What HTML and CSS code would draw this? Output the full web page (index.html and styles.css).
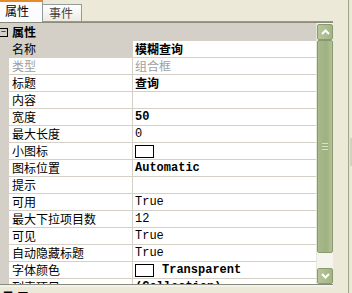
FILE: index.html
```html
<!DOCTYPE html>
<html lang="zh-CN">
<head>
  <meta charset="UTF-8" />
  <title>属性</title>
  <link rel="stylesheet" href="styles.css">
</head>
<body>
  <div class="window">
    <div class="main">
      <div class="tabs">
        <div class="tab active">属性</div>
        <div class="tab">事件</div>
        <div class="tab-fill"></div>
      </div>

      <div class="grid">
        <div class="rows">
          <div class="category">
            <span class="toggle">−</span>
            <span class="cat-name">属性</span>
          </div>
          <div class="row selected"><div class="name">名称</div><div class="value bold">模糊查询</div></div>
          <div class="row disabled"><div class="name">类型</div><div class="value">组合框</div></div>
          <div class="row"><div class="name">标题</div><div class="value bold">查询</div></div>
          <div class="row"><div class="name">内容</div><div class="value"></div></div>
          <div class="row"><div class="name">宽度</div><div class="value mono bold">50</div></div>
          <div class="row"><div class="name">最大长度</div><div class="value mono">0</div></div>
          <div class="row"><div class="name">小图标</div><div class="value"><span class="swatch"></span></div></div>
          <div class="row"><div class="name">图标位置</div><div class="value mono bold">Automatic</div></div>
          <div class="row"><div class="name">提示</div><div class="value"></div></div>
          <div class="row"><div class="name">可用</div><div class="value mono">True</div></div>
          <div class="row"><div class="name">最大下拉项目数</div><div class="value mono">12</div></div>
          <div class="row"><div class="name">可见</div><div class="value mono">True</div></div>
          <div class="row"><div class="name">自动隐藏标题</div><div class="value mono">True</div></div>
          <div class="row"><div class="name">字体颜色</div><div class="value mono bold"><span class="swatch"></span>Transparent</div></div>
          <div class="row"><div class="name">列表项目</div><div class="value mono bold">(Collection)</div></div>
        </div>

        <div class="scrollbar">
          <div class="sb-btn">
            <svg width="9" height="6" viewBox="0 0 9 6"><path d="M1 5 L4.5 1.5 L8 5" fill="none" stroke="#fff" stroke-width="2"/></svg>
          </div>
          <div class="sb-thumb"><span class="grip"></span></div>
          <div class="sb-track"></div>
          <div class="sb-btn">
            <svg width="9" height="6" viewBox="0 0 9 6"><path d="M1 1 L4.5 4.5 L8 1" fill="none" stroke="#fff" stroke-width="2"/></svg>
          </div>
        </div>
      </div>

      <div class="bottom">
        <span class="bottom-text">日 属</span>
      </div>
    </div>

    <div class="side">
      <div class="side-line"></div>
      <div class="side-edge"><div class="side-patch"></div></div>
    </div>
  </div>
</body>
</html>
```

FILE: styles.css
```css
body {
  margin: 0;
  width: 352px;
  height: 293px;
  overflow: hidden;
  background: #ece9d8;
  font-family: "Noto Sans CJK SC", "Liberation Sans", sans-serif;
  font-size: 12px;
  color: #000;
}

.window {
  display: flex;
  height: 293px;
}

.main {
  width: 333px;
  display: flex;
  flex-direction: column;
}

/* tabs */
.tabs {
  display: flex;
  align-items: flex-end;
  height: 22px;
}

.tab {
  box-sizing: border-box;
  width: 39px;
  height: 18px;
  border: 1px solid #919b9c;
  border-left: none;
  border-bottom: 1px solid #919b9c;
  background: linear-gradient(#ffffff, #ecebe5);
  color: #444;
  line-height: 16px;
  padding-left: 6px;
}

.tab.active {
  width: 43px;
  height: 22px;
  border-top: 2px solid #e68b2c;
  border-bottom: none;
  background: #fcfcfe;
  color: #000;
  line-height: 17px;
  padding-left: 5px;
}

.tab-fill {
  flex: 1;
  border-bottom: 1px solid #919b9c;
}

/* property grid */
.grid {
  display: flex;
  height: 261px;
  border-top: 1px solid #8c8c7c;
  border-bottom: 1px solid #8c8c7c;
  background: #fff;
}

.rows {
  flex: 1;
  overflow: hidden;
  background: #d4d0c8;
}

.category {
  display: flex;
  align-items: center;
  height: 18px;
  background: #d4d0c8;
}

.toggle {
  box-sizing: border-box;
  width: 8px;
  height: 9px;
  border: 1px solid #000;
  border-left: none;
  font-size: 9px;
  line-height: 6px;
  text-align: center;
  margin-right: 4px;
}

.cat-name {
  font-weight: bold;
  line-height: 16px;
}

.row {
  display: grid;
  grid-template-columns: 124px 1fr;
  height: 17px;
  margin-left: 9px;
  box-sizing: border-box;
  border-bottom: 1px solid #d4d0c8;
  background: #fff;
}

.name {
  padding-left: 3px;
  border-right: 1px solid #d4d0c8;
  line-height: 16px;
  white-space: nowrap;
}

.value {
  display: flex;
  align-items: center;
  padding-left: 2px;
  line-height: 16px;
  white-space: nowrap;
}

.row.selected .name {
  background: #d4d0c8;
  margin-left: -9px;
  padding-left: 12px;
}

.row.disabled {
  color: #a0a0a0;
}

.bold {
  font-weight: bold;
}

.mono {
  font-family: "Liberation Mono", "DejaVu Sans Mono", monospace;
}

.swatch {
  box-sizing: border-box;
  width: 19px;
  height: 13px;
  border: 1px solid #000;
  background: #fff;
  margin-right: 8px;
}

/* scrollbar */
.scrollbar {
  width: 16px;
  display: flex;
  flex-direction: column;
  background: #f5f5ee;
  border-left: 1px solid #e6e6dc;
}

.sb-btn {
  box-sizing: border-box;
  height: 16px;
  margin: 1px 0 0;
  border: 1px solid #8a9a70;
  border-radius: 2px;
  background: linear-gradient(90deg, #b7c69b, #a3b584);
  display: flex;
  align-items: center;
  justify-content: center;
}

.sb-thumb {
  box-sizing: border-box;
  height: 213px;
  border: 1px solid #8a9a70;
  border-radius: 2px;
  background: linear-gradient(90deg, #a9ba8a, #9fb180 60%, #b2c196);
  display: flex;
  align-items: center;
  justify-content: center;
}

.grip {
  width: 6px;
  height: 5px;
  border-top: 1px solid #d8e2c4;
  border-bottom: 1px solid #d8e2c4;
  background: linear-gradient(#9fb180 33%, #d8e2c4 33%, #d8e2c4 55%, #9fb180 55%);
}

.sb-track {
  flex: 1;
}

/* below the grid */
.bottom {
  flex: 1;
  border-top: 2px solid #f3f2ea;
  overflow: hidden;
}

.bottom-text {
  display: block;
  margin-top: 4px;
  padding-left: 2px;
  font-weight: bold;
  line-height: 12px;
}

/* right edge */
.side {
  flex: 1;
  display: flex;
}

.side-line {
  width: 15px;
  border-right: 1px solid #9aab86;
}

.side-edge {
  flex: 1;
  border-left: 1px solid #dfe6d4;
}

.side-patch {
  margin-top: 138px;
  height: 28px;
  background: #d4d0c8;
}
```
